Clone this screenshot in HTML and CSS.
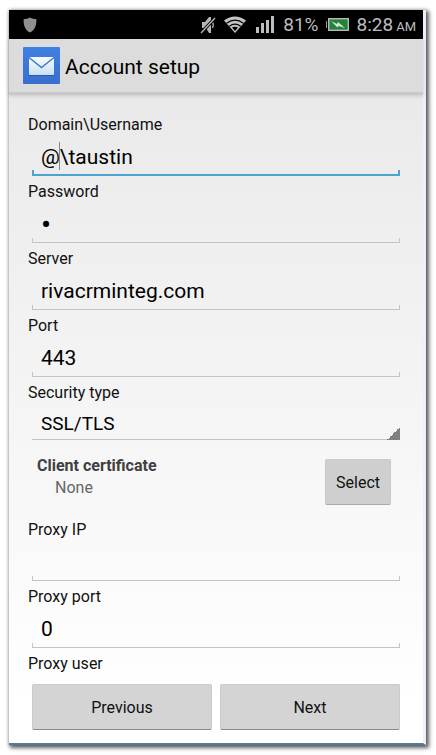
FILE: index.html
```html
<!DOCTYPE html>
<html lang="en">
<head>
    <meta charset="UTF-8">
    <meta name="viewport" content="width=device-width, initial-scale=1.0">
    <title>Account setup</title>
    <link rel="stylesheet" href="styles.css">
</head>
<body>

    <div class="phone">
        <div class="status-bar">
            <svg class="shield" width="14" height="16" viewBox="0 0 14 16"><path d="M7 0.5C9 2 11 2 13.3 2C13.8 8 12 13 7 15.5C2 13 0.2 8 0.7 2C3 2 5 2 7 0.5Z" fill="#909090"/></svg>
            <svg class="muted" width="16" height="18" viewBox="0 0 16 18">
                <path d="M2 6H5L9 1H11V17H9L6 12H2Z" fill="#b5b5b5"/>
                <path d="M12.3 6Q14.3 9 12.3 12" fill="none" stroke="#999" stroke-width="1.5"/>
                <path d="M1 17L15 2" stroke="#000" stroke-width="3.2"/>
                <path d="M1 17L15 2" stroke="#b5b5b5" stroke-width="1.4"/>
            </svg>
            <svg class="wifi" width="22" height="17" viewBox="0 0 22 17">
                <path d="M0 4.5Q11 -3.5 22 4.5L11 17Z" fill="#c4c4c4"/>
                <path d="M2.5 7.3Q11 1 19.5 7.3M5.3 10.2Q11 6 16.7 10.2" fill="none" stroke="#000" stroke-width="1.1"/>
                <path d="M8 11.6Q11 9.8 14 11.6L11 15Z" fill="#000"/>
            </svg>
            <svg class="signal" width="18" height="17" viewBox="0 0 18 17"><path d="M0 11H3V17H0ZM5 7H8V17H5ZM10 4H13V17H10ZM15 0H18V17H15Z" fill="#bdbdbd"/></svg>
            <span class="percent">81%</span>
            <svg class="battery" width="23" height="13" viewBox="0 0 23 13">
                <path d="M0 3H1V10H0Z" fill="#999"/>
                <rect x="2.7" y="0.7" width="19.6" height="11.6" fill="#24833b" stroke="#b8b8b8" stroke-width="1.4"/>
                <path d="M5 3L11 6L12 4L19 10L12.5 8L11.5 9.5Z" fill="#d5e2d6"/>
            </svg>
            <div class="time"><span>8:28</span><small>AM</small></div>
        </div>

        <header class="title-bar">
            <svg width="37" height="37" viewBox="0 0 37 37">
                <defs>
                    <linearGradient id="tile" x1="0" y1="0" x2="0" y2="1"><stop offset="0" stop-color="#3f80e2"/><stop offset="1" stop-color="#386fcd"/></linearGradient>
                    <linearGradient id="paper" x1="0" y1="0" x2="0" y2="1"><stop offset="0" stop-color="#fafdfe"/><stop offset="1" stop-color="#c8e2f0"/></linearGradient>
                </defs>
                <rect width="37" height="37" rx="1" fill="url(#tile)"/>
                <rect x="6" y="11" width="25" height="18" rx="1" fill="#2857a6"/>
                <rect x="6" y="10" width="25" height="18" rx="1" fill="url(#paper)"/>
                <path d="M6 10.5L18.5 20.5L31 10.5" fill="none" stroke="#3d78cf" stroke-width="1.5"/>
            </svg>
            <h1>Account setup</h1>
        </header>

        <form class="setup-form">
            <div class="fields">
                <div class="field">
                    <label for="username">Domain\Username</label>
                    <div class="input-wrap">
                        <input class="input-field active" type="text" id="username" value="@\taustin">
                        <span class="caret"></span>
                    </div>
                </div>
                <div class="field">
                    <label for="password">Password</label>
                    <input class="input-field password" type="password" id="password" value="1">
                </div>
                <div class="field">
                    <label for="server">Server</label>
                    <input class="input-field" type="text" id="server" value="rivacrminteg.com">
                </div>
                <div class="field">
                    <label for="port">Port</label>
                    <input class="input-field" type="text" id="port" value="443">
                </div>
                <div class="field">
                    <label for="security">Security type</label>
                    <select class="select-field" id="security">
                        <option>SSL/TLS</option>
                    </select>
                </div>
                <div class="certificate">
                    <div>
                        <strong>Client certificate</strong>
                        <p>None</p>
                    </div>
                    <button class="button select-button" type="button">Select</button>
                </div>
                <div class="field">
                    <label for="proxyIp">Proxy IP</label>
                    <input class="input-field" type="text" id="proxyIp">
                </div>
                <div class="field">
                    <label for="proxyPort">Proxy port</label>
                    <input class="input-field" type="text" id="proxyPort" value="0">
                </div>
                <div class="section-label">Proxy user</div>
            </div>

            <div class="actions">
                <button class="button" type="button">Previous</button>
                <button class="button" type="button">Next</button>
            </div>
        </form>
    </div>

</body>
</html>
```
FILE: styles.css
```css
* {
    box-sizing: border-box;
}

body {
    font-family: Roboto, sans-serif;
    background: #fff;
    color: #111;
    margin: 0;
    padding: 10px 10px 10px 9px;
}

.phone {
    display: flex;
    flex-direction: column;
    min-height: calc(100vh - 20px);
    border-right: 3px solid #ebf0fa;
    border-bottom: 2px solid #527a9c;
    background: linear-gradient(#e7e7e7, #fff 95%);
    box-shadow: 2px 2px 4px 1px rgba(0, 0, 0, 0.6), 0 0 3px 1px rgba(0, 0, 0, 0.15);
}

.status-bar {
    display: flex;
    align-items: center;
    height: 29px;
    padding: 0 7px 0 14px;
    background: #000;
    color: #bdbdbd;
    font-size: 19px;
}

.muted {
    margin-left: auto;
}

.wifi {
    margin-left: 8px;
}

.signal {
    margin-left: 10px;
}

.percent {
    margin-left: 9px;
}

.battery {
    margin-left: 7px;
}

.time {
    display: flex;
    align-items: baseline;
    gap: 3px;
    margin-left: 8px;
}

.time small {
    font-size: 13px;
}

.title-bar {
    display: flex;
    align-items: center;
    gap: 5px;
    height: 56px;
    padding-left: 14px;
    background: #dcdcdc;
    border-bottom: 3px solid #c8c8c8;
    box-shadow: 0 1px 4px rgba(0, 0, 0, 0.15);
}

.title-bar h1 {
    margin: 0;
    padding-top: 2px;
    font-size: 21px;
    font-weight: normal;
    color: #000;
}

.setup-form {
    display: flex;
    flex-direction: column;
    flex: 1;
    padding: 20px 23px 13px 19px;
}

.fields {
    flex: 1;
}

.field {
    margin-bottom: 6px;
}

.field label,
.section-label {
    display: block;
    font-size: 16px;
    line-height: 20px;
}

.input-wrap {
    position: relative;
}

.input-field,
.select-field {
    --line: #c4c4c4;
    display: block;
    width: calc(100% - 4px);
    height: 41px;
    margin: 0 0 0 4px;
    padding: 3px 9px 0;
    border: 0;
    border-radius: 0;
    outline: none;
    font-family: inherit;
    font-size: 21px;
    color: #000;
    background:
        linear-gradient(var(--line), var(--line)) left bottom / 1px 5px no-repeat,
        linear-gradient(var(--line), var(--line)) right bottom / 1px 5px no-repeat,
        linear-gradient(var(--line), var(--line)) left bottom / 100% 1px no-repeat;
}

.input-field.active {
    --line: #4ba3d1;
    background-size: 2px 6px, 2px 6px, 100% 2px;
}

.input-field.password {
    font-size: 30px;
}

.caret {
    position: absolute;
    left: 31px;
    top: 7px;
    width: 1px;
    height: 28px;
    background: #888;
}

.select-field {
    height: 37px;
    padding-top: 3px;
    appearance: none;
    font-size: 19px;
    background:
        linear-gradient(135deg, transparent 50%, #808080 50%) right bottom / 13px 13px no-repeat,
        linear-gradient(var(--line), var(--line)) left bottom / 100% 1px no-repeat;
}

.certificate {
    display: flex;
    justify-content: space-between;
    align-items: flex-start;
    margin: 19px 9px 15px;
    font-size: 16px;
    line-height: 22px;
}

.certificate strong {
    display: block;
    margin-top: -4px;
    color: #404040;
}

.certificate p {
    margin: 0 0 0 18px;
    color: #666;
}

.button {
    height: 46px;
    padding: 0 10px;
    border: 1px solid #cacaca;
    border-bottom: 1px solid #8a8a8a;
    border-radius: 2px;
    background: #d4d4d4;
    color: #111;
    font-family: inherit;
    font-size: 16px;
}

.select-button {
    border-bottom-color: #aaa;
    background: #cfcfcf;
}

.actions {
    display: flex;
    gap: 8px;
    margin-left: 4px;
}

.actions .button {
    flex: 1;
}
```
